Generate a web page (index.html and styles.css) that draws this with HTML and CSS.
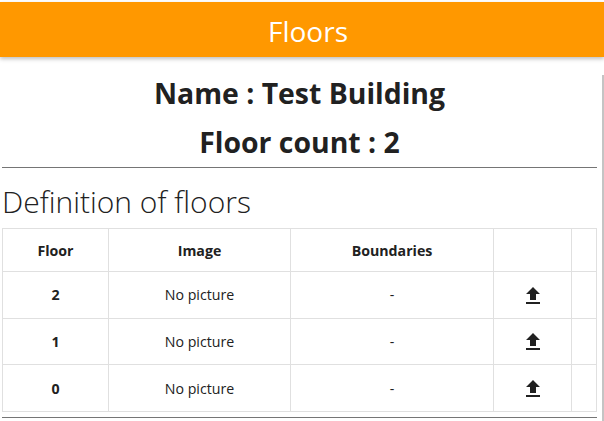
FILE: index.html
```html
<!DOCTYPE html>
<html lang="en">
<head>
  <meta charset="UTF-8">
  <title>Floors</title>
  <link rel="stylesheet" href="styles.css">
</head>
<body>
  <div class="header">Floors</div>
  <div class="content">
    <h1>Name : Test Building</h1>
    <h1>Floor count : 2</h1>
    <hr>
    <h2>Definition of floors</h2>
    <table>
      <colgroup>
        <col class="col-floor">
        <col class="col-image">
        <col class="col-bounds">
        <col class="col-upload">
        <col>
      </colgroup>
      <thead>
        <tr>
          <th>Floor</th>
          <th>Image</th>
          <th>Boundaries</th>
          <th></th>
          <th></th>
        </tr>
      </thead>
      <tbody>
        <tr>
          <th>2</th>
          <td>No picture</td>
          <td>-</td>
          <td><svg class="icon" viewBox="0 0 24 24"><path d="M9 16h6v-6h4l-7-7-7 7h4zm-4 2h14v2H5z"/></svg></td>
          <td></td>
        </tr>
        <tr>
          <th>1</th>
          <td>No picture</td>
          <td>-</td>
          <td><svg class="icon" viewBox="0 0 24 24"><path d="M9 16h6v-6h4l-7-7-7 7h4zm-4 2h14v2H5z"/></svg></td>
          <td></td>
        </tr>
        <tr>
          <th>0</th>
          <td>No picture</td>
          <td>-</td>
          <td><svg class="icon" viewBox="0 0 24 24"><path d="M9 16h6v-6h4l-7-7-7 7h4zm-4 2h14v2H5z"/></svg></td>
          <td></td>
        </tr>
      </tbody>
    </table>
    <hr class="bottom-line">
  </div>
  <div class="scrollbar"></div>
</body>
</html>
```

FILE: styles.css
```css
html, body {
  height: 421px;
  overflow: hidden;
}

body {
  margin: 0;
  padding-top: 2px;
  box-sizing: border-box;
  font-family: "Open Sans", "Noto Sans", sans-serif;
  color: #212121;
  background: white;
}

.header {
  background: #ff9800;
  color: white;
  height: 55px;
  line-height: 58px;
  padding-left: 12px;
  text-align: center;
  font-size: 28px;
  font-weight: 400;
  box-shadow: 0px 2px 4px rgba(0, 0, 0, 0.25);
}

.content {
  padding: 0 7px 0 2px;
}

h1 {
  margin: 0;
  height: 49px;
  line-height: 49px;
  text-align: center;
  font-size: 28.4px;
  font-weight: 700;
}

h1:first-child {
  margin-top: 12px;
}

hr {
  margin: 0;
  border: none;
  border-top: 1px solid #757575;
}

h2 {
  margin: 0;
  height: 60px;
  line-height: 68px;
  font-size: 30px;
  font-weight: 300;
}

table {
  width: 100%;
  table-layout: fixed;
  border-collapse: collapse;
  font-size: 14.2px;
}

.col-floor {
  width: 106px;
}

.col-image {
  width: 182px;
}

.col-bounds {
  width: 203px;
}

.col-upload {
  width: 78px;
}

th, td {
  border: 1px solid #e0e0e0;
  padding: 0;
  text-align: center;
}

thead tr {
  height: 43px;
}

tbody tr {
  height: 46.67px;
}

.icon {
  display: block;
  width: 24px;
  height: 24px;
  margin: 2px auto 0;
  fill: #212121;
}

.bottom-line {
  margin-top: 5px;
}

.scrollbar {
  position: absolute;
  right: 0;
  top: 75px;
  bottom: 0;
  width: 2px;
  background: #c4c4c4;
}
```
